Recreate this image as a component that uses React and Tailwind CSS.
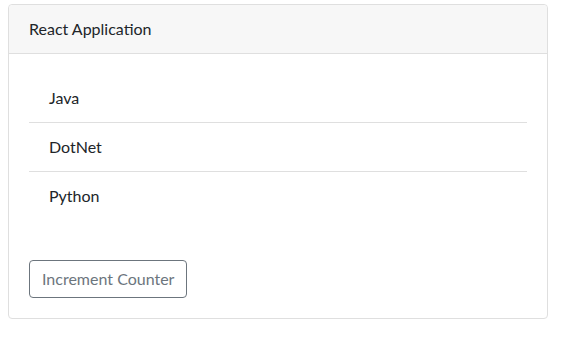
import React, { useState } from 'react';

const App = () => {
  const [count, setCount] = useState(0);
  const courses = ['Java', 'DotNet', 'Python'];

  return (
    <div className="bg-white min-h-screen pt-1 pl-2" style={{ fontFamily: 'Lato, "Open Sans", sans-serif' }}>
      <div className="w-[540px] border border-[#dfdfdf] rounded text-[16px] text-[#212529] bg-white">
        {/* header */}
        <div className="bg-[#f7f7f7] border-b border-[#dfdfdf] rounded-t px-5 py-3 leading-6">
          React Application
        </div>

        {/* body */}
        <div className="p-5">
          <ul className="mb-4">
            {courses.map((course, index) => (
              <li
                key={course}
                className={`px-5 py-3 leading-6 ${index < courses.length - 1 ? 'border-b border-[#dfdfdf]' : ''}`}
              >
                {course}
              </li>
            ))}
          </ul>
          <div className="h-6"></div>
          <button
            onClick={() => setCount(count + 1)}
            className="border border-[#6c757d] text-[#6c757d] rounded px-3 py-1.5 leading-6 h-[38px]"
          >
            Increment Counter
          </button>
        </div>
      </div>
    </div>
  );
};

export default App;
